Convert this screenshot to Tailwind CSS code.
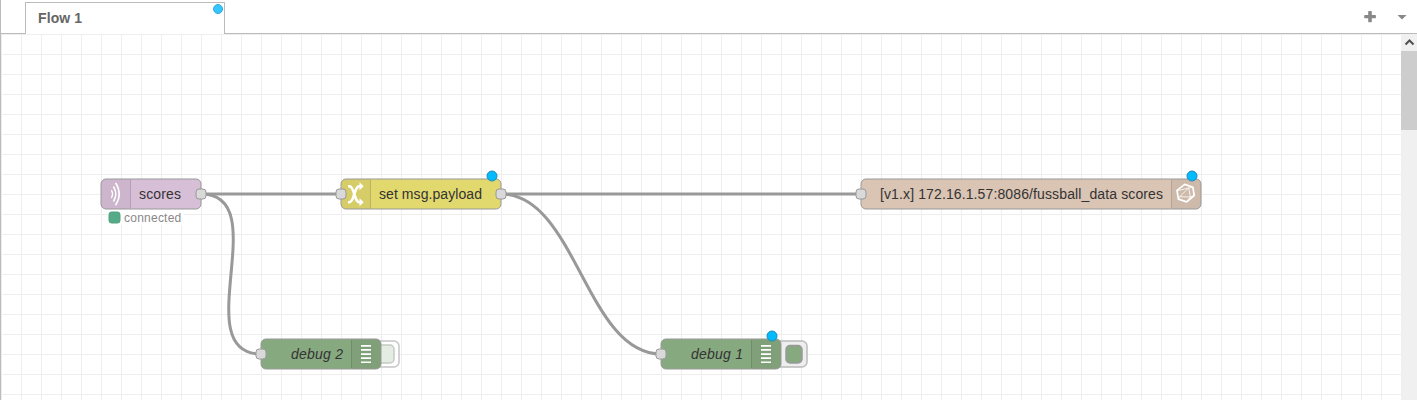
<!DOCTYPE html>
<html lang="en">
<head>
<meta charset="utf-8">
<title>Flow editor</title>
<script src="https://cdn.jsdelivr.net/npm/@tailwindcss/browser@4"></script>
</head>
<body class="flex h-[400px] w-[1417px] flex-col overflow-hidden border-l border-[#bbb] bg-white font-['Liberation_Sans',Arial,sans-serif]">
  <header class="flex h-[34px] shrink-0">
    <div class="w-6 border-b border-[#bbb]"></div>
    <div class="relative mt-[2px] h-8 w-[200px] border border-b-0 border-[#bbb] pl-3 text-[14px] leading-[31px] font-bold tracking-[0.1px] text-[#666]">Flow 1
      <svg class="absolute top-[1px] right-[1px]" width="10" height="10"><circle cx="5" cy="5" r="4.5" fill="#33c6ff" stroke="#36a9d8"/></svg>
    </div>
    <div class="flex flex-1 items-start justify-end border-b border-[#bbb]">
      <svg width="56" height="33" viewBox="0 0 56 33" fill="#888"><path d="M7.900 11h2.200q.7 0 .7.700v3.400h3.400q.7 0 .7.700v1.800q0 .7-.7.700h-3.400v3.300q0 .7-.7.700H7.900q-.7 0-.7-.7v-3.300H3.900q-.7 0-.7-.7v-1.800q0-.7.7-.7h3.300v-3.400q0-.7.7-.7z"/><path d="M36.500 15h9l-4.500 4.600z"/></svg>
    </div>
  </header>
  <main class="flex flex-1 overflow-hidden">
    <svg class="block shrink-0" width="1400" height="366" viewBox="1 34 1400 366" font-size="14" fill="#333">
      <defs>
        <pattern id="grid" width="20" height="20" x="1" y="34" patternUnits="userSpaceOnUse"><path d="M0 0h20v1H1v19H0z" fill="#eee"/></pattern>
        <rect id="port" x="-5" y="-5" width="10" height="10" rx="3" fill="#d9d9d9" stroke="#999"/>
        <circle id="changed" r="5" fill="#00bcff" stroke="#2089b5"/>
        <path id="list" d="M0 0h10v1.700H0zM0 4.100h10v1.700H0zM0 8.200h10v1.700H0zM0 12.300h10v1.700H0zM0 16.400h10v1.700H0z" fill="#fff"/>
      </defs>
      <rect x="1" y="34" width="1400" height="366" fill="url(#grid)"/>
      <g fill="none" stroke="#999" stroke-width="3">
        <path d="M201 194H341M501 194H861"/>
        <path d="M201 194C276 194 186 354 261 354"/>
        <path d="M501 194C576 194 586 354 661 354"/>
      </g>

      <g>
        <rect x="101" y="179" width="100" height="30" rx="5" fill="#d8bfd8"/>
        <path d="M131 179v30h-25a5 5 0 0 1-5-5v-20a5 5 0 0 1 5-5z" fill="#000" fill-opacity=".05"/>
        <path d="M130.500 180v28" stroke="#000" stroke-opacity=".12"/>
        <g fill="none" stroke="#fff" stroke-linecap="round"><path d="M111.600 190.500q2 3.500 0 7" stroke-width="1.300"/><path d="M113.700 187q4.200 7 0 14" stroke-width="1.500"/><path d="M116 183.500q6.600 10.500 0 21" stroke-width="1.700"/></g>
        <rect x="101" y="179" width="100" height="30" rx="5" fill="none" stroke="#999"/>
        <text x="139" y="199" textLength="42">scores</text>
        <use href="#port" x="201" y="194"/>
        <rect x="107" y="210" width="77" height="15" fill="#fff"/>
        <rect x="109" y="212" width="11" height="11" rx="2.500" fill="#5a8" stroke="#53a083"/>
        <text x="124" y="222" font-size="12" fill="#888" textLength="57.300">connected</text>
      </g>

      <g>
        <rect x="341" y="179" width="160" height="30" rx="5" fill="#e2d96e"/>
        <path d="M371 179v30h-25a5 5 0 0 1-5-5v-20a5 5 0 0 1 5-5z" fill="#000" fill-opacity=".05"/>
        <path d="M370.500 180v28" stroke="#000" stroke-opacity=".12"/>
        <path d="M348 186.200h1.500C354.500 186.200 354 202.200 359.500 202.200h1M348 202.200h1.500C354.500 202.200 354 186.200 359.500 186.200h1" fill="none" stroke="#fff" stroke-width="2.600"/>
        <path d="M359.500 182.200l4.200 4-4.200 4zM359.500 198.200l4.200 4-4.200 4z" fill="#fff"/>
        <rect x="341" y="179" width="160" height="30" rx="5" fill="none" stroke="#999"/>
        <text x="379" y="199" textLength="103">set msg.payload</text>
        <use href="#port" x="341" y="194"/><use href="#port" x="501" y="194"/>
        <use href="#changed" x="492" y="176"/>
      </g>

      <g>
        <rect x="861" y="179" width="340" height="30" rx="5" fill="#dac4b4"/>
        <path d="M1171 179v30h25a5 5 0 0 0 5-5v-20a5 5 0 0 0-5-5z" fill="#000" fill-opacity=".05"/>
        <path d="M1171.500 180v28" stroke="#000" stroke-opacity=".12"/>
        <g fill="none" stroke="#fff" stroke-linejoin="round"><path d="M1184.700 184.400l8.200 2.900 1.300 8.200-7.500 6.400-8.300-2.800-1.400-8.700z" stroke-width="1.700"/><path d="M1188.700 188l-9 8.700 10.700.3zM1177.500 190.700l11.200-2.700 4-.7M1190.400 197l3.600-1.500M1190.400 197l-3.700 4.500M1179.700 196.700l-1.300 2.400" stroke-width=".8"/></g>
        <rect x="861" y="179" width="340" height="30" rx="5" fill="none" stroke="#999"/>
        <text x="880" y="199" textLength="283">[v1.x] 172.16.1.57:8086/fussball_data scores</text>
        <use href="#port" x="861" y="194"/>
        <use href="#changed" x="1192" y="176"/>
      </g>

      <g>
        <rect x="367" y="341" width="32" height="26" rx="5" fill="#fff" fill-opacity=".6" stroke="#c5c5c5" stroke-width="1.500"/>
        <rect x="376" y="345" width="18" height="18" rx="4" fill="#e5ece3" stroke="#c5c9c4" stroke-width="1.500"/>
        <rect x="261" y="339" width="120" height="30" rx="5" fill="#87a980"/>
        <path d="M351 339v30h25a5 5 0 0 0 5-5v-20a5 5 0 0 0-5-5z" fill="#000" fill-opacity=".05"/>
        <path d="M351.500 340v28" stroke="#000" stroke-opacity=".12"/>
        <use href="#list" x="361" y="345"/>
        <rect x="261" y="339" width="120" height="30" rx="5" fill="none" stroke="#999"/>
        <text x="291" y="359" font-style="italic" textLength="52">debug 2</text>
        <use href="#port" x="261" y="354"/>
      </g>

      <g>
        <rect x="775" y="341" width="32" height="26" rx="5" fill="#eee" stroke="#bbb" stroke-width="1.500"/>
        <rect x="786" y="345.500" width="16" height="17.500" rx="4" fill="#87a980" stroke="#999" stroke-width="1.500"/>
        <rect x="661" y="339" width="120" height="30" rx="5" fill="#87a980"/>
        <path d="M751 339v30h25a5 5 0 0 0 5-5v-20a5 5 0 0 0-5-5z" fill="#000" fill-opacity=".05"/>
        <path d="M751.500 340v28" stroke="#000" stroke-opacity=".12"/>
        <use href="#list" x="761" y="345"/>
        <rect x="661" y="339" width="120" height="30" rx="5" fill="none" stroke="#999"/>
        <text x="691" y="359" font-style="italic" textLength="52">debug 1</text>
        <use href="#port" x="661" y="354"/>
        <use href="#changed" x="772" y="336"/>
      </g>
    </svg>
    <div class="flex w-4 shrink-0 flex-col bg-[#f0f0f0]">
      <svg width="16" height="17" fill="none" stroke="#505050" stroke-width="2"><path d="M4.500 10.500l4-4 4 4"/></svg>
      <div class="h-[79px] bg-[#cdcdcd]"></div>
    </div>
  </main>
</body>
</html>
